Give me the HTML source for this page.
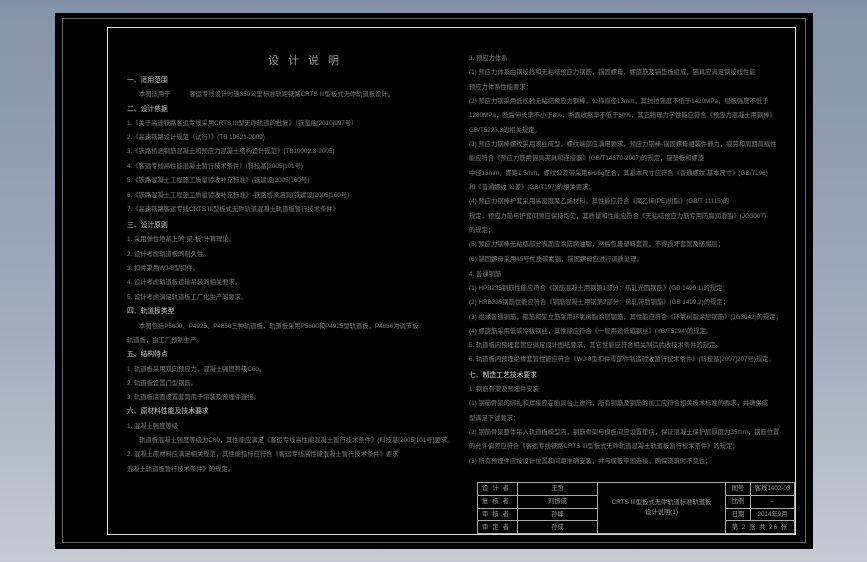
<!DOCTYPE html>
<html><head><meta charset="utf-8"><style>
html,body{margin:0;padding:0}
body{width:867px;height:562px;overflow:hidden;position:relative;background:linear-gradient(#8493a9,#a3adbd 60%,#c6cad3);font-family:"Liberation Sans","Noto Sans CJK SC",sans-serif}
.blk{position:absolute;left:55px;top:13px;width:758px;height:536px;background:#000}
.gl{position:absolute;left:62px;top:18px;width:744px;height:525px;border:1px solid #666;box-sizing:border-box}
.wf{position:absolute;left:107px;top:27px;width:689px;height:508px;border:1px solid #ddd;box-sizing:border-box}
.t{position:absolute;font-size:6.3px;line-height:8px;color:#7e7e7e;white-space:nowrap}
.h{color:#cfcfcf;font-size:6.8px}
table{position:absolute;left:477px;top:482px;width:318px;height:52px;border-collapse:collapse;font-size:6.3px;color:#999;table-layout:fixed}
td{border:1px solid #aaa;text-align:center;padding:0;line-height:7px;white-space:nowrap;overflow:hidden}
</style></head><body>
<div class="blk"></div><div class="gl"></div><div class="wf"></div>
<div class="t" style="left:268px;top:55px;font-size:11px;line-height:13px;letter-spacing:9px;color:#999">设计说明</div>
<div class="t h" style="left:127px;top:77px">一、适用范围</div>
<div class="t" style="left:139px;top:91px">本图适用于　　　客运专线设计时速350公里标准轨距铁路CRTS III型板式无砟轨道板设计。</div>
<div class="t h" style="left:127px;top:106px">二、设计依据</div>
<div class="t" style="left:127px;top:120px">1.《关于高速铁路客运专线采用CRTS III型无砟轨道的批复》（铁鉴函[2010]997号）</div>
<div class="t" style="left:127px;top:134px">2.《高速铁路设计规范（试行）》(TB 10621-2009)</div>
<div class="t" style="left:127px;top:148px">3.《铁路桥涵钢筋混凝土和预应力混凝土结构设计规范》(TB10002.3-2005)</div>
<div class="t" style="left:127px;top:163px">4.《客运专线高性能混凝土暂行技术条件》(科技基[2005]101号)</div>
<div class="t" style="left:127px;top:177px">5.《铁路混凝土工程施工质量验收补充标准》(铁建设[2005]160号)</div>
<div class="t" style="left:127px;top:192px">6.《铁路混凝土工程施工质量验收补充标准》-铁路桥梁涵洞(铁建设[2005]160号)</div>
<div class="t" style="left:127px;top:206px">7.《高速铁路客运专线CRTS III型板式无砟轨道混凝土轨道板暂行技术条件》</div>
<div class="t h" style="left:127px;top:222px">三、设计原则</div>
<div class="t" style="left:127px;top:236px">1. 采用弹性地基上的"梁-板"计算理论。</div>
<div class="t" style="left:127px;top:251px">2. 设计考虑轨道板的耐久性。</div>
<div class="t" style="left:127px;top:265px">3. 扣件采用WJ-8型扣件。</div>
<div class="t" style="left:127px;top:279px">4. 设计考虑轨道板运输吊装的相关要求。</div>
<div class="t" style="left:127px;top:294px">5. 设计考虑满足轨道板工厂化生产的要求。</div>
<div class="t h" style="left:127px;top:308px">四、轨道板类型</div>
<div class="t" style="left:139px;top:323px">本图包括P5600、P4925、P4856三种轨道板，轨道板采用P5600和P4925型轨道板，P4856为调节板</div>
<div class="t" style="left:127px;top:337px">轨道板，由工厂预制生产。</div>
<div class="t h" style="left:127px;top:351px">五、结构特点</div>
<div class="t" style="left:127px;top:366px">1. 轨道板采用双向预应力，混凝土强度等级C60。</div>
<div class="t" style="left:127px;top:380px">2. 轨道板设置门型钢筋。</div>
<div class="t" style="left:127px;top:394px">3. 轨道板底面设置套筒用于吊装及预埋件连接。</div>
<div class="t h" style="left:127px;top:408px">六、原材料性能及技术要求</div>
<div class="t" style="left:127px;top:423px">1. 混凝土强度等级</div>
<div class="t" style="left:139px;top:437px">轨道板混凝土强度等级为C60，其性能应满足《客运专线高性能混凝土暂行技术条件》(科技基[2005]101号)要求。</div>
<div class="t" style="left:127px;top:451px">2. 混凝土原材料应满足相关规范，其性能指标应符合《客运专线高性能混凝土暂行技术条件》要求</div>
<div class="t" style="left:127px;top:466px">混凝土轨道板暂行技术条件》的规定。</div>

<div class="t" style="left:469px;top:55px">3. 预应力体系</div>
<div class="t" style="left:469px;top:69px">(1) 预应力体系由钢绞线和无粘结预应力钢筋，锚固螺母，螺旋筋及锚垫板组成，锚具应满足钢绞线性能</div>
<div class="t" style="left:469px;top:84px">预应力体系性能要求：</div>
<div class="t" style="left:469px;top:98px">(2) 预应力钢采用低松弛无粘结预应力钢棒，公称直径13mm，其抗拉强度不低于1420MPa，屈服强度不低于</div>
<div class="t" style="left:469px;top:112px">1280MPa，断后伸长率不小于8%，断面收缩率不低于50%，其它物理力学性能应符合《预应力混凝土用钢棒》</div>
<div class="t" style="left:469px;top:127px">GB/T5223.3的相关规定。</div>
<div class="t" style="left:469px;top:141px">(3) 预应力钢棒螺纹采用滚丝成型，螺纹端部应满足要求，预应力钢棒-锚固螺母组装件静力，疲劳和周期荷载性</div>
<div class="t" style="left:469px;top:155px">能应符合《预应力筋用锚具夹具和连接器》(GB/T14370-2007)的规定，锚垫板和螺旋</div>
<div class="t" style="left:469px;top:170px">中径13mm，螺距1.5mm，螺纹公差带采用6H/6g配合，其基本尺寸应符合《普通螺纹 基本尺寸》(GB/T196)</div>
<div class="t" style="left:469px;top:184px">和《普通螺纹 公差》(GB/T197)的相关要求；</div>
<div class="t" style="left:469px;top:198px">(4) 预应力钢棒护套采用高密度聚乙烯材料，其性能应符合《聚乙烯(PE)树脂》(GB/T 11115)的</div>
<div class="t" style="left:469px;top:213px">规定，预应力筋与护套间隙应保持均匀，其质量和性能应符合《无粘结预应力筋专用防腐润滑脂》(JG3007)</div>
<div class="t" style="left:469px;top:227px">的规定；</div>
<div class="t" style="left:469px;top:241px">(5) 预应力钢棒无粘结部分表面应涂防腐油脂，然后包裹塑料套管，不得损坏套管及防腐层；</div>
<div class="t" style="left:469px;top:256px">(6) 锚固螺母采用45号优质碳素钢，锚固螺母应进行调质处理。</div>
<div class="t" style="left:469px;top:271px">4. 普通钢筋</div>
<div class="t" style="left:469px;top:285px">(1) HPB235钢筋性能应符合《钢筋混凝土用钢第1部分：热轧光圆钢筋》(GB 1499.1)的规定；</div>
<div class="t" style="left:469px;top:299px">(2) HRB335钢筋性能应符合《钢筋混凝土用钢第2部分：热轧带肋钢筋》(GB 1499.2)的规定；</div>
<div class="t" style="left:469px;top:314px">(3) 绝缘普通钢筋，箍筋和架立筋采用环氧树脂涂层钢筋，其性能应符合《环氧树脂涂层钢筋》(JG3042)的规定；</div>
<div class="t" style="left:469px;top:328px">(4) 螺旋筋采用低碳冷拔钢丝，其性能应符合《一般用途低碳钢丝》(YB/T5294)的规定。</div>
<div class="t" style="left:469px;top:342px">5. 轨道板内预埋套管应满足设计图纸要求，其它性能应符合相关制造验收技术条件的规定。</div>
<div class="t" style="left:469px;top:356px">6. 轨道板内预埋绝缘套管性能应符合《WJ-8型扣件零部件制造验收暂行技术条件》(科技基[2007]207号)规定。</div>
<div class="t h" style="left:469px;top:372px">七、制造工艺技术要求</div>
<div class="t" style="left:469px;top:386px">1. 钢筋骨架及预埋件安装</div>
<div class="t" style="left:469px;top:400px">(1) 钢筋骨架的绑扎和焊接应在胎具台上进行，所有钢筋及钢筋的加工应符合相关技术标准的要求，并确保成</div>
<div class="t" style="left:469px;top:415px">型满足下述要求：</div>
<div class="t" style="left:469px;top:429px">(2) 钢筋骨架整体吊入轨道板模型内，钢筋骨架与模板间应设置垫块，保证混凝土保护层厚度为35mm，钢筋位置</div>
<div class="t" style="left:469px;top:443px">的允许偏差应符合《客运专线铁路CRTS III型板式无砟轨道混凝土轨道板暂行技术条件》的规定；</div>
<div class="t" style="left:469px;top:458px">(3) 所有预埋件应按设计位置和间距准确安装，并与模板牢固连接，确保浇筑时不变位；</div>

<table>
<colgroup><col style="width:40px"><col style="width:80px"><col style="width:128px"><col style="width:25px"><col></colgroup>
<tr><td style="letter-spacing:4px">设计者</td><td>王哲</td><td rowspan="4" style="line-height:10px">CRTS III型板式无砟轨道标准轨道板<br>设计说明(1)</td><td>图号</td><td>客线1402-03</td></tr>
<tr><td style="letter-spacing:4px">复核者</td><td>刘振成</td><td>比例</td><td>-</td></tr>
<tr><td style="letter-spacing:4px">审核者</td><td>孙峰</td><td>日期</td><td>2014年9月</td></tr>
<tr><td style="letter-spacing:4px">审定者</td><td>孙成</td><td colspan="2" style="letter-spacing:1px">第 2 张 共 26 张</td></tr>
</table>
</body></html>
